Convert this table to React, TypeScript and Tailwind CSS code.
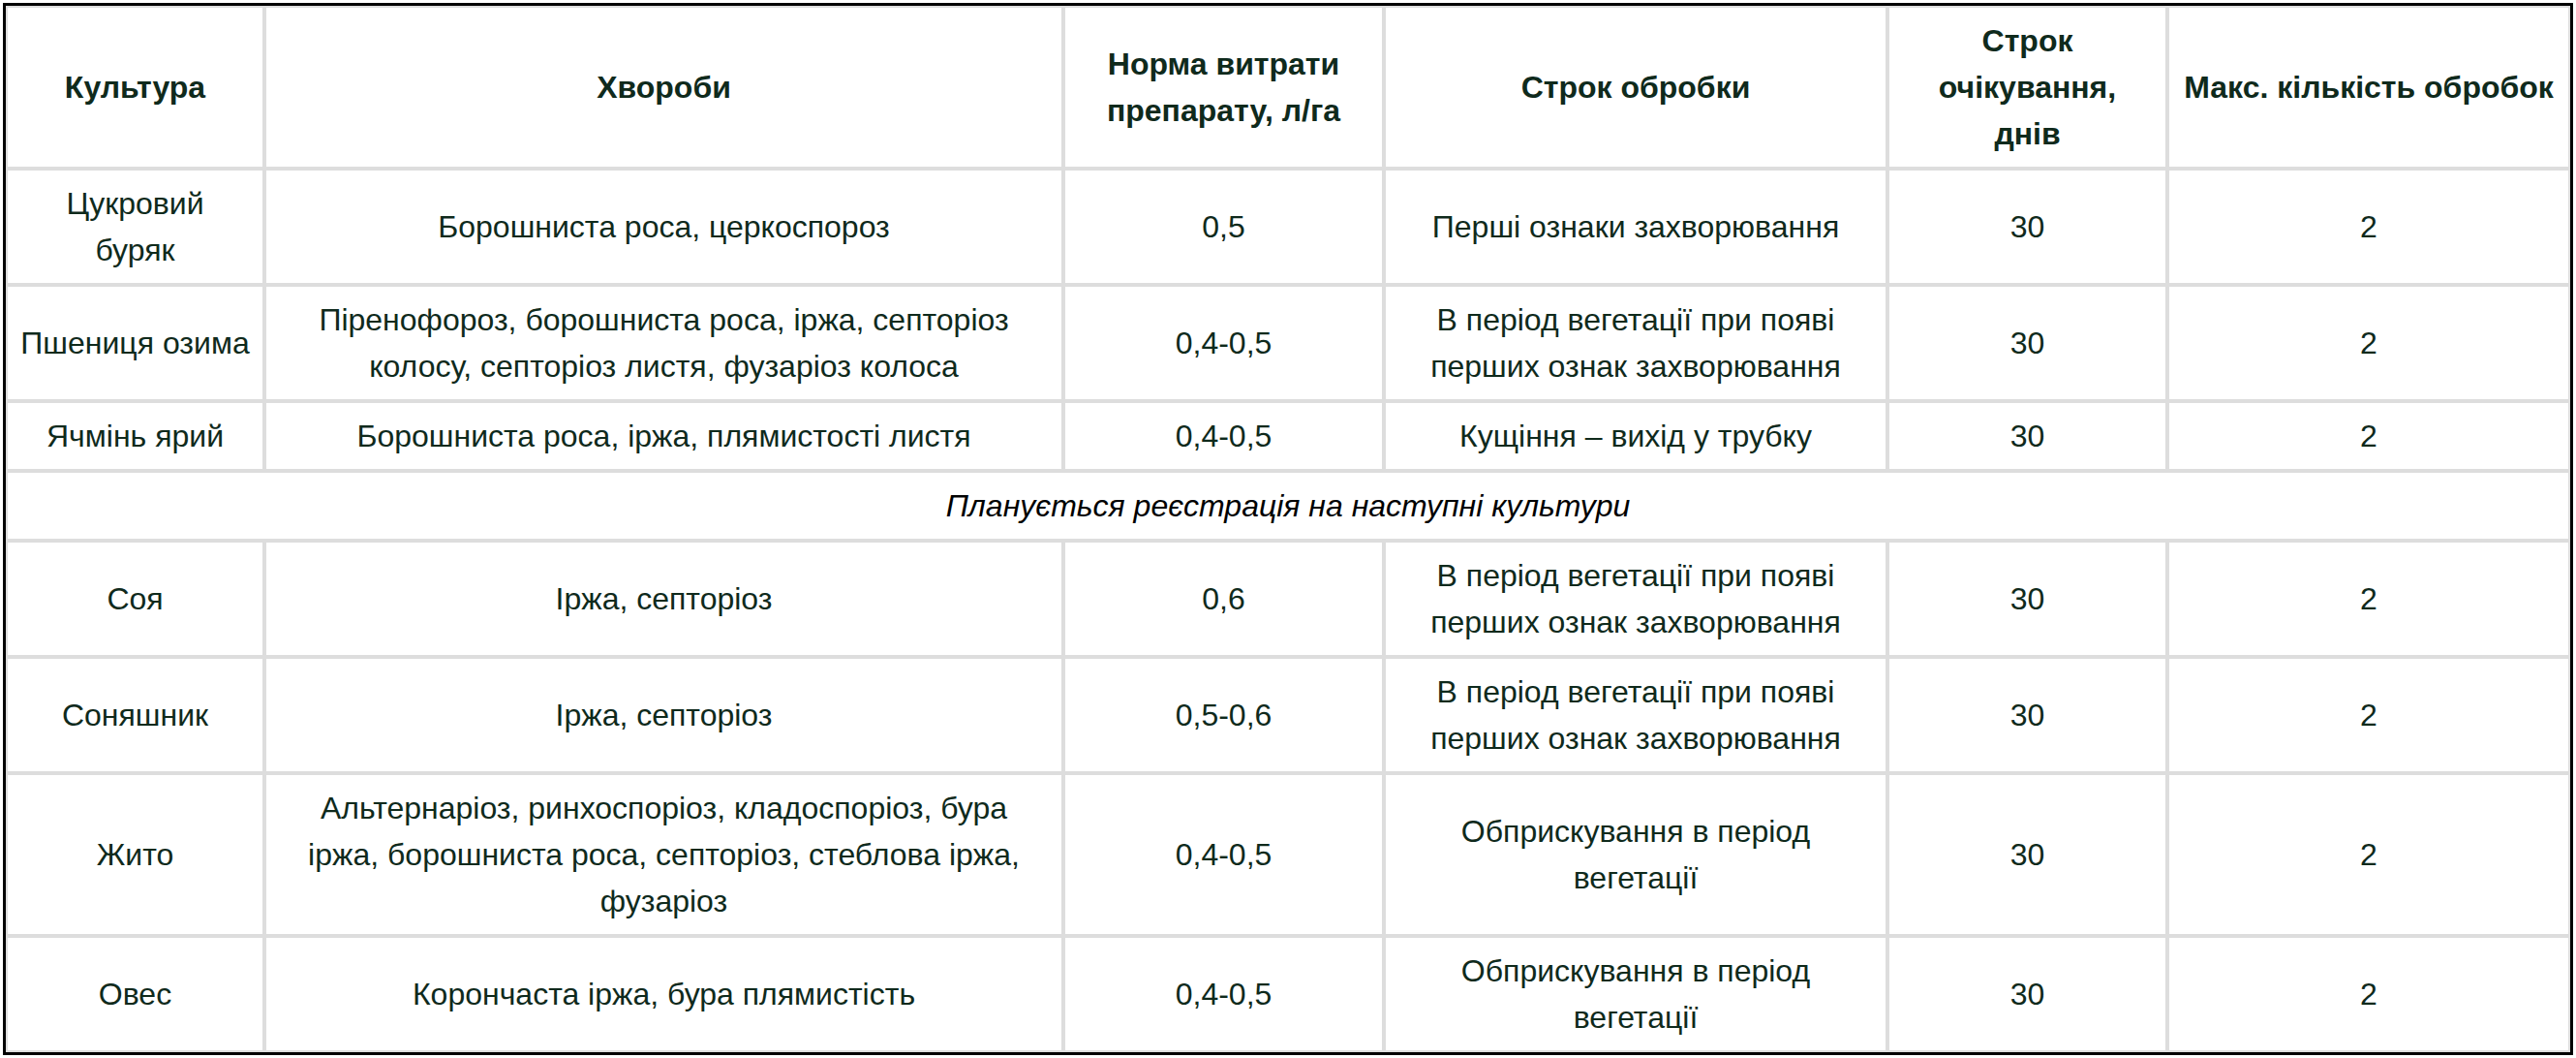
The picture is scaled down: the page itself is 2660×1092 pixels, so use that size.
const headers = [
  { label: 'Культура', w: 'w-[267px]' },
  { label: 'Хвороби', w: 'w-[825px]' },
  { label: 'Норма витрати препарату, л/га', w: 'w-[331px]' },
  { label: 'Строк обробки', w: 'w-[520px]' },
  { label: 'Строк\nочікування,\nднів', w: 'w-[289px]' },
  { label: 'Макс. кількість обробок', w: 'w-[416px]' },
];

type Row = [string, string, string, string, string, string];

const registered: Row[] = [
  ['Цукровий\nбуряк', 'Борошниста роса, церкоспороз', '0,5', 'Перші ознаки захворювання', '30', '2'],
  [
    'Пшениця озима',
    'Піренофороз, борошниста роса, іржа, септоріоз колосу, септоріоз листя, фузаріоз колоса',
    '0,4-0,5',
    'В період вегетації при появі перших ознак захворювання',
    '30',
    '2',
  ],
  ['Ячмінь ярий', 'Борошниста роса, іржа, плямистості листя', '0,4-0,5', 'Кущіння – вихід у трубку', '30', '2'],
];

const planned: Row[] = [
  ['Соя', 'Іржа, септоріоз', '0,6', 'В період вегетації при появі перших ознак захворювання', '30', '2'],
  ['Соняшник', 'Іржа, септоріоз', '0,5-0,6', 'В період вегетації при появі перших ознак захворювання', '30', '2'],
  [
    'Жито',
    'Альтернаріоз, ринхоспоріоз, кладоспоріоз, бура\nіржа, борошниста роса, септоріоз, стеблова іржа,\nфузаріоз',
    '0,4-0,5',
    'Обприскування в період вегетації',
    '30',
    '2',
  ],
  ['Овес', 'Корончаста іржа, бура плямистість', '0,4-0,5', 'Обприскування в період вегетації', '30', '2'],
];

const cell = 'border-2 border-[#dddddd] px-[12px] py-[10px] text-center align-middle whitespace-pre-line';

function DataRow({ row }: { row: Row }) {
  return (
    <tr>
      {row.map((v, i) => (
        <td key={i} className={cell}>
          {v}
        </td>
      ))}
    </tr>
  );
}

export default function App() {
  return (
    <div className="min-h-screen bg-white p-[3px]">
      <div className="border-[3px] border-black">
        <table
          className="w-[2648px] table-fixed border-separate border-spacing-0 text-[32px] leading-[48px] text-[#0f2a1c]"
          style={{ fontFamily: '"Liberation Sans", Arial, sans-serif' }}
        >
          <thead>
            <tr>
              {headers.map((h) => (
                <th key={h.label} className={`${cell} ${h.w} font-bold`}>
                  {h.label}
                </th>
              ))}
            </tr>
          </thead>
          <tbody>
            {registered.map((r) => (
              <DataRow key={r[0]} row={r} />
            ))}
            <tr>
              <td colSpan={6} className={`${cell} italic text-black`}>
                Планується реєстрація на наступні культури
              </td>
            </tr>
            {planned.map((r) => (
              <DataRow key={r[0]} row={r} />
            ))}
          </tbody>
        </table>
      </div>
    </div>
  );
}
